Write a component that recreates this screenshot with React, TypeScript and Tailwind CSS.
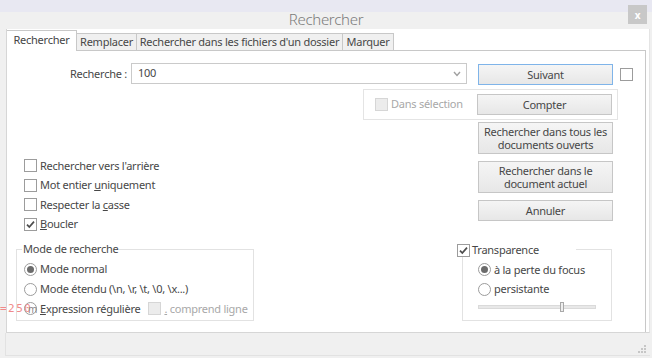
import React from "react";

function Box({ checked = false, disabled = false }: { checked?: boolean; disabled?: boolean }) {
  return (
    <span
      className={
        disabled
          ? "relative inline-block w-[13px] h-[13px] shrink-0 border border-[#d6d6d6] bg-[#ececec]"
          : "relative inline-block w-[13px] h-[13px] shrink-0 border border-[#9c9c9c] bg-white"
      }
    >
      {checked && (
        <svg className="absolute left-0 top-0" width="11" height="11" viewBox="0 0 11 11">
          <path d="M2 5.6 L4.3 8 L9 2.6" fill="none" stroke="#4d4d4d" strokeWidth="1.7" />
        </svg>
      )}
    </span>
  );
}

function Radio({ checked = false }: { checked?: boolean }) {
  return (
    <span className="flex w-[13px] h-[13px] shrink-0 items-center justify-center rounded-full border border-[#9c9c9c] bg-white">
      {checked && <span className="block w-[7px] h-[7px] rounded-full bg-[#6b6b6b]" />}
    </span>
  );
}

function Btn({ children, h, blue = false }: { children: React.ReactNode; h: "21" | "32"; blue?: boolean }) {
  const base =
    "flex flex-col w-[135px] items-center justify-center whitespace-nowrap text-center leading-[13px] text-[#474747] bg-linear-to-b from-[#f5f5f5] to-[#e7e7e7] border";
  const height = h === "21" ? " h-[21px]" : " h-[32px]";
  const border = blue ? " border-[#7fb4e9]" : " border-[#c6c6c6]";
  return <div className={base + height + border}>{children}</div>;
}

export default function App() {
  return (
    <div className="relative w-[652px] h-[358px] overflow-hidden bg-[#f0f0f0] font-['Noto_Sans',sans-serif] text-[11px] tracking-[-0.25px] text-[#474747]">
      {/* title area */}
      <div className="flex h-[29px] items-center justify-center pt-[8px] bg-[linear-gradient(#e8e8f2_0_12px,#f0f0f0_12px)]">
        <span className="text-[15px] font-light tracking-[-0.3px] text-[#7b7b7b] leading-[20px]">Rechercher</span>
      </div>
      <div className="absolute left-[628px] top-[5px] flex w-[19px] h-[19px] items-center justify-center bg-[#c8c8c8] text-[10px] font-bold leading-none text-white">
        x
      </div>

      {/* white frame */}
      <div className="ml-[6px] w-[644px] h-[304px] border-l border-b border-r border-l-[#d6d6d6] border-b-[#d6d6d6] border-r-[#e4e4e4] bg-white">
        {/* tabs */}
        <div className="flex h-[21px] items-end whitespace-nowrap">
          <div className="relative z-10 mb-[-1px] flex w-[70px] h-[21px] items-center justify-center border-t border-r border-[#c8c8c8] bg-white pb-[1px] text-[#444]">
            Rechercher
          </div>
          <div className="flex w-[60px] h-[17px] items-center justify-center border-t border-r border-[#c8c8c8] bg-[#f0f0f0]">
            Remplacer
          </div>
          <div className="flex w-[206px] h-[17px] items-center justify-center border-t border-r border-[#c8c8c8] bg-[#f0f0f0]">
            Rechercher dans les fichiers d'un dossier
          </div>
          <div className="flex w-[51px] h-[17px] items-center justify-center border-t border-r border-[#c8c8c8] bg-[#f0f0f0]">
            Marquer
          </div>
        </div>

        {/* panel */}
        <div className="relative w-[639px] h-[282px] border-t border-r border-[#c8c8c8]">
          {/* row 1 */}
          <div className="flex h-[22px] items-start mt-[12px]">
            <div className="w-[120px] h-[21px] leading-[21px] text-right">Recherche :</div>
            <div className="ml-[4px] flex w-[336px] h-[21px] items-center justify-between border border-[#cacaca] bg-white pl-[6px] pr-[5px]">
              <span>100</span>
              <svg width="8" height="6" viewBox="0 0 8 6">
                <path d="M1 1 L4 4.5 L7 1" fill="none" stroke="#a0a0a0" strokeWidth="1.4" />
              </svg>
            </div>
            <div className="ml-[11px] mt-[1px]">
              <Btn h="21" blue>
                <span>Suivant</span>
              </Btn>
            </div>
            <div className="ml-[7px] mt-[5px] flex">
              <Box />
            </div>
          </div>

          {/* row 2 */}
          <div className="ml-[356px] mt-[4px] flex w-[255px] h-[31px] items-center border border-[#e4e4e4]">
            <span className="ml-[11px] flex">
              <Box disabled />
            </span>
            <span className="ml-[3px] text-[#a8a8a8]">Dans sélection</span>
            <span className="ml-auto mr-[5px]">
              <Btn h="21">
                <span>Compter</span>
              </Btn>
            </span>
          </div>

          {/* section A */}
          <div className="mt-[2px] flex h-[112px]">
            <div className="w-[471px] pl-[17px] pt-[34px]">
              <div className="flex h-[19.5px] items-center gap-[3px]">
                <Box />
                <span>Rechercher vers l'arrière</span>
              </div>
              <div className="flex h-[19.5px] items-center gap-[3px]">
                <Box />
                <span>
                  Mot entier <span className="underline">u</span>niquement
                </span>
              </div>
              <div className="flex h-[19.5px] items-center gap-[3px]">
                <Box />
                <span>
                  Respecter la <span className="underline">c</span>asse
                </span>
              </div>
              <div className="flex h-[19.5px] items-center gap-[3px]">
                <Box checked />
                <span>
                  <span className="underline">B</span>oucler
                </span>
              </div>
            </div>
            <div className="flex flex-col">
              <Btn h="32">
                <span className="block h-[13px]">Rechercher dans tous les</span>
                <span className="block h-[13px]">documents ouverts</span>
              </Btn>
              <div className="mt-[7px]">
                <Btn h="32">
                  <span className="block h-[13px]">Rechercher dans le</span>
                  <span className="block h-[13px]">document actuel</span>
                </Btn>
              </div>
              <div className="mt-[7px]">
                <Btn h="21">
                  <span>Annuler</span>
                </Btn>
              </div>
            </div>
          </div>

          {/* section B */}
          <div className="mt-[15px] flex">
            <div className="relative ml-[9px] w-[238px] h-[72px] border border-[#e2e2e2] pl-[7px] pt-[9.5px]">
              <span className="absolute left-[5px] top-[-9px] bg-white px-[1px] leading-[16px]">Mode de recherche</span>
              <div className="flex h-[19.75px] items-center gap-[3px]">
                <Radio checked />
                <span>Mode normal</span>
              </div>
              <div className="flex h-[19.75px] items-center gap-[3px]">
                <Radio />
                <span>Mode étendu (\n, \r, \t, \0, \x...)</span>
              </div>
              <div className="mr-[4px] flex h-[19.75px] items-center overflow-hidden whitespace-nowrap">
                <Radio />
                <span className="ml-[3px]">
                  <span className="underline">E</span>xpression régulière
                </span>
                <span className="ml-[8px] flex">
                  <Box disabled />
                </span>
                <span className="ml-[3px] text-[#a8a8a8]">
                  <span className="underline">.</span> comprend ligne nouvelle
                </span>
              </div>
            </div>

            <div className="relative ml-[208px] w-[150px] h-[72px] border border-[#e2e2e2] pl-[15px] pt-[10px]">
              <div className="absolute left-[-6px] top-[-7px] flex w-[119px] h-[14px] items-center gap-[2px] bg-white">
                <Box checked />
                <span>Transparence</span>
              </div>
              <div className="flex h-[19.5px] items-center gap-[3px]">
                <Radio checked />
                <span>à la perte du focus</span>
              </div>
              <div className="flex h-[19.5px] items-center gap-[3px]">
                <Radio />
                <span>persistante</span>
              </div>
              <div className="relative mt-[3px] flex h-[10px] w-[118px] items-center">
                <div className="h-[4px] w-full border border-[#dadada] bg-[#e8e8e8]" />
                <div className="absolute left-[82px] top-0 h-[10px] w-[4px] border border-[#a9a9a9] bg-[#eeeeee]" />
              </div>
            </div>
          </div>
        </div>
      </div>

      {/* bottom bar */}
      <div className="ml-[5px] w-[645px] h-[23px] border-l border-b border-[#e2e2e2]" />

      {/* resize grip */}
      <svg className="absolute left-[637px] top-[344px]" width="10" height="10" viewBox="0 0 10 10">
        <rect x="7" y="1" width="2" height="2" fill="#c6c6c6" />
        <rect x="4" y="4" width="2" height="2" fill="#c6c6c6" />
        <rect x="7" y="4" width="2" height="2" fill="#c6c6c6" />
        <rect x="1" y="7" width="2" height="2" fill="#c6c6c6" />
        <rect x="4" y="7" width="2" height="2" fill="#c6c6c6" />
        <rect x="7" y="7" width="2" height="2" fill="#c6c6c6" />
      </svg>

      {/* overlay artifact */}
      <span className="absolute left-0 top-[302px] text-[11px] leading-[14px] tracking-[1.5px] text-[#f08a8a] font-['DejaVu_Sans_Mono',monospace]">
        =250
      </span>
      <span className="absolute left-[28px] top-[302px] text-[10px] leading-[14px] text-[#8a8a8a]">m</span>
    </div>
  );
}
